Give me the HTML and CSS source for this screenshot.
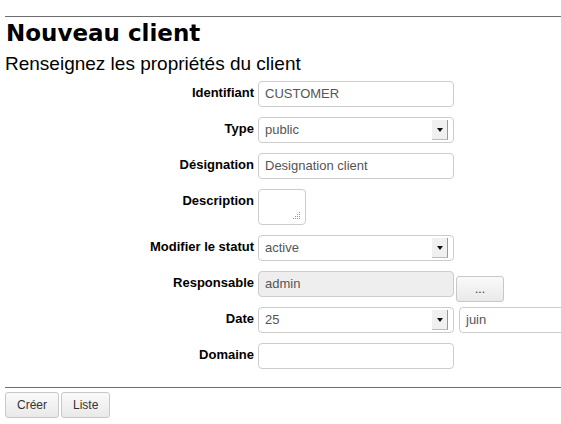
FILE: index.html
```html
<!DOCTYPE html>
<html lang="fr">
<head>
<meta charset="utf-8">
<title>Nouveau client</title>
<link rel="stylesheet" href="styles.css">
</head>
<body>
<div class="page">
  <hr class="rule top">
  <h1 class="title">Nouveau client</h1>
  <h2 class="subtitle">Renseignez les propriétés du client</h2>
  <form class="form">
    <div class="row">
      <label class="lbl">Identifiant</label>
      <div class="field"><span class="input">CUSTOMER</span></div>
    </div>
    <div class="row">
      <label class="lbl">Type</label>
      <div class="field"><span class="input select">public<span class="arrow"></span></span></div>
    </div>
    <div class="row">
      <label class="lbl">Désignation</label>
      <div class="field"><span class="input">Designation client</span></div>
    </div>
    <div class="row">
      <label class="lbl">Description</label>
      <div class="field"><span class="textarea"><svg class="grip" width="8" height="8" viewBox="0 0 8 8"><g fill="#999"><rect x="6" y="0" width="1" height="1"/><rect x="6" y="2" width="1" height="1"/><rect x="4" y="2" width="1" height="1"/><rect x="6" y="4" width="1" height="1"/><rect x="4" y="4" width="1" height="1"/><rect x="2" y="4" width="1" height="1"/><rect x="6" y="6" width="1" height="1"/><rect x="4" y="6" width="1" height="1"/><rect x="2" y="6" width="1" height="1"/><rect x="0" y="6" width="1" height="1"/></g></svg></span></div>
    </div>
    <div class="row">
      <label class="lbl">Modifier le statut</label>
      <div class="field"><span class="input select">active<span class="arrow"></span></span></div>
    </div>
    <div class="row">
      <label class="lbl">Responsable</label>
      <div class="field"><span class="input disabled">admin</span><span class="btn dots">...</span></div>
    </div>
    <div class="row">
      <label class="lbl">Date</label>
      <div class="field wide"><span class="input select">25<span class="arrow"></span></span><span class="input month">juin</span></div>
    </div>
    <div class="row">
      <label class="lbl">Domaine</label>
      <div class="field"><span class="input"></span></div>
    </div>
  </form>
  <hr class="rule bottom">
  <div class="actions">
    <span class="btn">Créer</span><span class="btn">Liste</span>
  </div>
</div>
</body>
</html>
```
FILE: styles.css
```css
html, body {
  margin: 0;
  padding: 0;
  background: #fff;
}
body {
  overflow: hidden;
  font-family: "Liberation Sans", Arial, sans-serif;
  color: #000;
}
.page {
  padding: 0 0 0 5px;
}
.rule {
  margin: 0;
  border: 0;
  height: 1px;
  background: #6e6e6e;
}
.rule.top {
  margin-top: 16px;
}
.title {
  margin: 2px 0 0 1px;
  font-family: "DejaVu Sans", sans-serif;
  font-weight: bold;
  font-size: 23px;
  line-height: 28px;
}
.subtitle {
  margin: 6px 0 0 0;
  font-weight: normal;
  font-size: 19px;
  line-height: 22px;
}
.form {
  margin-top: 6px;
  display: grid;
  grid-template-columns: 249px 1fr;
  column-gap: 4px;
  row-gap: 10px;
}
.row {
  display: contents;
}
.lbl {
  text-align: right;
  font-weight: bold;
  font-size: 13px;
  line-height: 15px;
  padding-top: 4px;
}
.field {
  display: flex;
  align-items: flex-start;
  gap: 2px;
}
.field.wide {
  gap: 5px;
}
.input {
  position: relative;
  box-sizing: border-box;
  display: block;
  width: 196px;
  height: 26px;
  border: 1px solid #ccc;
  border-radius: 4px;
  background: #fff;
  padding: 0 0 0 6px;
  font-size: 13px;
  line-height: 24px;
  color: #555;
  white-space: nowrap;
  flex: none;
}
.input.disabled {
  background: #eee;
}
.input.month {
  width: 120px;
}
.arrow {
  position: absolute;
  right: 5px;
  top: 2px;
  width: 16px;
  height: 20px;
  box-sizing: border-box;
  background: #f0f0f0;
  border-right: 1px solid #999;
  border-bottom: 1px solid #bbb;
}
.arrow::after {
  content: "";
  position: absolute;
  left: 5px;
  top: 8px;
  border-left: 3px solid transparent;
  border-right: 3px solid transparent;
  border-top: 4px solid #111;
}
.textarea {
  position: relative;
  display: block;
  box-sizing: border-box;
  width: 48px;
  height: 36px;
  border: 1px solid #ccc;
  border-radius: 4px;
  background: #fff;
}
.grip {
  position: absolute;
  right: 4px;
  bottom: 4px;
}
.btn {
  display: inline-block;
  box-sizing: border-box;
  height: 26px;
  padding: 0 11px;
  border: 1px solid #c8c8c8;
  border-radius: 3px;
  background: linear-gradient(#fafafa, #e9e9e9);
  font-family: "Liberation Sans", Arial, sans-serif;
  font-size: 12px;
  line-height: 24px;
  color: #333;
  white-space: nowrap;
}
.btn.dots {
  margin-top: 5px;
  margin-bottom: -5px;
  width: 48px;
  text-align: center;
  padding: 0;
}
.rule.bottom {
  margin-top: 18px;
}
.actions {
  margin-top: 4px;
  display: flex;
  gap: 2px;
}
```
